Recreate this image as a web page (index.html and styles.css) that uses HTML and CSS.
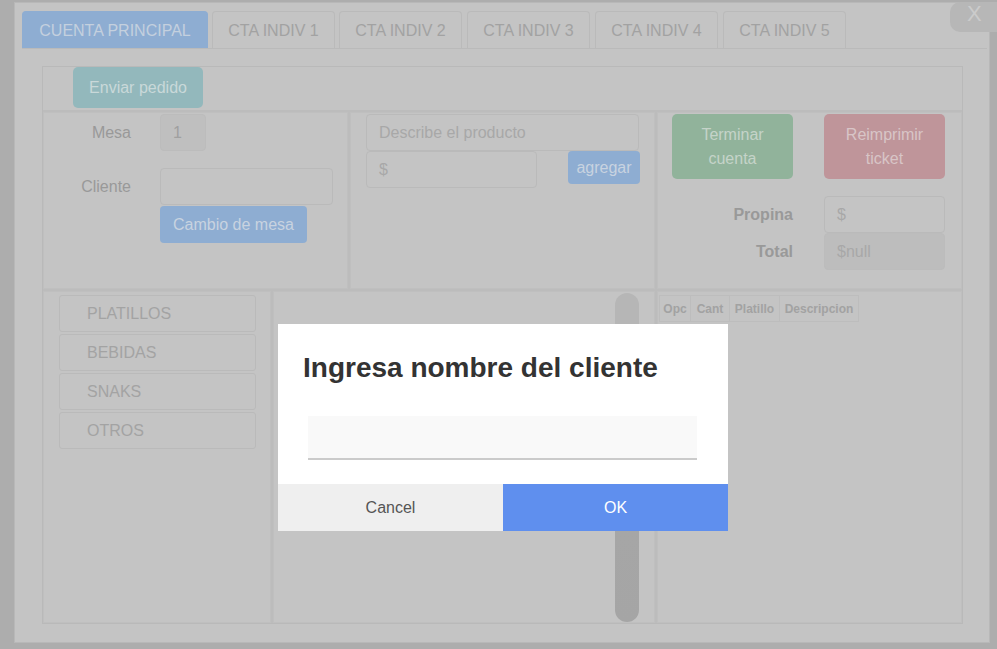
FILE: index.html
```html
<!DOCTYPE html>
<html lang="es">
<head>
<meta charset="utf-8">
<title>Cuenta</title>
<link rel="stylesheet" href="styles.css">
</head>
<body>
<div class="window">
  <div class="tabs">
    <div class="tab active">CUENTA PRINCIPAL</div>
    <div class="tab">CTA INDIV 1</div>
    <div class="tab">CTA INDIV 2</div>
    <div class="tab">CTA INDIV 3</div>
    <div class="tab">CTA INDIV 4</div>
    <div class="tab">CTA INDIV 5</div>
  </div>
  <div class="main">
    <div class="row1">
      <div class="btn btn-teal btn-enviar">Enviar pedido</div>
    </div>
    <div class="row2">
      <div class="cell cell-mesa">
        <div class="field-row">
          <div class="label">Mesa</div>
          <div class="input input-mesa">1</div>
        </div>
        <div class="field-row field-cliente">
          <div class="label">Cliente</div>
          <div class="input input-cliente"></div>
        </div>
        <div class="field-row">
          <div class="label"></div>
          <div class="btn btn-blue btn-cambio">Cambio de mesa</div>
        </div>
      </div>
      <div class="cell cell-prod">
        <div class="input input-desc placeholder">Describe el producto</div>
        <div class="prod-row">
          <div class="input input-precio placeholder">$</div>
          <div class="btn btn-blue btn-agregar">agregar</div>
        </div>
      </div>
      <div class="cell cell-total">
        <div class="btn btn-green btn-big">Terminar<br>cuenta</div>
        <div class="btn btn-red btn-big">Reimprimir<br>ticket</div>
        <div class="label-b propina-label">Propina</div>
        <div class="input input-sm input-propina placeholder">$</div>
        <div class="label-b">Total</div>
        <div class="input input-sm input-ro placeholder">$null</div>
      </div>
    </div>
    <div class="row3">
      <div class="cell cell-cats">
        <div class="cat">PLATILLOS</div>
        <div class="cat">BEBIDAS</div>
        <div class="cat">SNAKS</div>
        <div class="cat">OTROS</div>
      </div>
      <div class="cell cell-list">
        <div class="thumb"></div>
      </div>
      <div class="cell cell-table">
        <div class="thead">
          <div class="th th-opc">Opc</div>
          <div class="th th-cant">Cant</div>
          <div class="th th-plat">Platillo</div>
          <div class="th th-desc">Descripcion</div>
        </div>
      </div>
    </div>
  </div>
</div>
<div class="close">X</div>
<div class="dialog">
  <h2 class="dialog-title">Ingresa nombre del cliente</h2>
  <div class="dialog-input"></div>
  <div class="dialog-actions">
    <div class="dbtn dbtn-cancel">Cancel</div>
    <div class="dbtn dbtn-ok">OK</div>
  </div>
</div>
</body>
</html>
```
FILE: styles.css
```css
* { box-sizing: border-box; }
html, body { margin: 0; padding: 0; }
body {
  background: #adadad;
  font-family: "Liberation Sans", Arial, sans-serif;
  font-size: 16px;
  color: #a0a0a0;
  width: 997px;
  height: 649px;
  overflow: hidden;
  position: relative;
}
.window {
  margin: 2px 0 0 14px;
  width: 976px;
  height: 641px;
  border: 1px solid #b8b8b8;
  background: #c4c4c4;
  padding: 8px 0 0 7px;
}
.tabs {
  display: flex;
  gap: 4px;
  width: 965px;
  border-bottom: 1px solid #bababa;
}
.tab {
  width: 123px;
  height: 37px;
  line-height: 37px;
  text-align: center;
  border: 1px solid #bababa;
  border-bottom: none;
  border-radius: 4px 4px 0 0;
  color: #a2a2a2;
  white-space: nowrap;
}
.tab:nth-child(n+4) { margin-left: 1px; }
.tab.active {
  width: 186px;
  background: #8eadd2;
  border-color: #8eadd2;
  color: #c4d0de;
}
.main {
  margin: 17px 0 0 20px;
  width: 921px;
  height: 558px;
  border: 1px solid #b9b9b9;
  background: #bcbcbc;
  display: flex;
  flex-direction: column;
  gap: 2px;
}
.row1 {
  height: 43px;
  background: #c4c4c4;
  padding-left: 30px;
}
.btn {
  display: flex;
  align-items: center;
  justify-content: center;
  text-align: center;
  border-radius: 4px;
  color: #cdd6dc;
}
.btn-teal { background: #93b8bc; color: #c9d8d9; }
.btn-blue { background: #8eadd2; color: #c8d3e0; }
.btn-green { background: #91b39b; color: #c5d3c9; }
.btn-red { background: #bf959a; color: #d8c5c7; }
.btn-enviar { width: 130px; height: 41px; border-radius: 5px; }
.row2 {
  height: 177px;
  display: grid;
  grid-template-columns: 305px 305px 305px;
  gap: 2px;
}
.row3 {
  flex: 1;
  display: grid;
  grid-template-columns: 228px 382px 305px;
  gap: 2px;
}
.cell {
  background: #c4c4c4;
  border: 1px solid #bfbfbf;
}
.input {
  border: 1px solid #bababa;
  border-radius: 4px;
  height: 37px;
  display: flex;
  align-items: center;
  padding-left: 12px;
  color: #a0a0a0;
}
.placeholder { color: #a8a8a8; }
.cell-mesa { padding: 1px 0 0 0; }
.field-row { display: flex; align-items: center; gap: 29px; }
.label { width: 87px; text-align: right; color: #999; flex: none; }
.input-mesa { width: 46px; background: #bfbfbf; border-color: #bcbcbc; }
.field-cliente { margin-top: 17px; }
.input-cliente { width: 173px; }
.btn-cambio { width: 147px; height: 37px; margin-top: 1px; }
.cell-prod { padding: 1px 0 0 15px; }
.input-desc { width: 273px; }
.prod-row { display: flex; justify-content: space-between; width: 274px; }
.input-precio { width: 171px; }
.btn-agregar { width: 72px; height: 33px; }
.cell-total {
  padding: 1px 0 0 14px;
  display: grid;
  grid-template-columns: 121px 121px;
  align-content: start;
  column-gap: 31px;
  align-items: center;
}
.btn-big { height: 65px; line-height: 24px; border-radius: 5px; }
.label-b { font-weight: bold; text-align: right; color: #999; }
.propina-label, .input-propina { margin-top: 17px; }
.input-sm { width: 121px; }
.input-ro { background: #bdbdbd; border-color: #bcbcbc; }
.cell-cats {
  padding: 3px 0 0 15px;
  display: flex;
  flex-direction: column;
  gap: 2px;
}
.cat {
  width: 197px;
  height: 37px;
  border: 1px solid #bababa;
  border-radius: 3px;
  display: flex;
  align-items: center;
  padding-left: 27px;
  color: #a3a3a3;
}
.cell-list {
  display: flex;
  justify-content: flex-end;
  padding: 1px 15px 0 0;
}
.thumb {
  width: 24px;
  height: 329px;
  border-radius: 12px;
  background: linear-gradient(#b6b6b6 0, #b6b6b6 30px, #a6a6a6 240px, #a5a5a5 100%);
}
.cell-table { padding: 3px 0 0 1px; }
.thead { display: flex; }
.th {
  height: 27px;
  border: 1px solid #bdbdbd;
  margin-right: -1px;
  display: flex;
  align-items: center;
  justify-content: center;
  font-size: 12px;
  font-weight: bold;
  color: #a2a2a2;
}
.th-opc { width: 32px; }
.th-cant { width: 40px; }
.th-plat { width: 51px; }
.th-desc { width: 80px; }
.close {
  position: absolute;
  left: 950px;
  top: 2px;
  width: 60px;
  height: 30px;
  border-radius: 10px;
  background: #b7b7b7;
  color: #cbcbcb;
  font-size: 22px;
  padding-left: 17px;
  line-height: 24px;
}
.dialog {
  position: absolute;
  left: 278px;
  top: 324px;
  width: 450px;
  height: 207px;
  background: #fff;
  display: flex;
  flex-direction: column;
}
.dialog-title {
  margin: 27px 0 0 25px;
  font-size: 28px;
  line-height: 34px;
  font-weight: bold;
  color: #333;
}
.dialog-input {
  margin: 31px 31px 0 30px;
  height: 44px;
  background: #f9f9f9;
  border-bottom: 2px solid #cbcbcb;
}
.dialog-actions {
  margin-top: auto;
  display: flex;
  height: 47px;
}
.dbtn {
  flex: 1;
  display: flex;
  align-items: center;
  justify-content: center;
  font-size: 16px;
}
.dbtn-cancel { background: #efefef; color: #555; }
.dbtn-ok { background: #5f8fee; color: #fff; }
```
